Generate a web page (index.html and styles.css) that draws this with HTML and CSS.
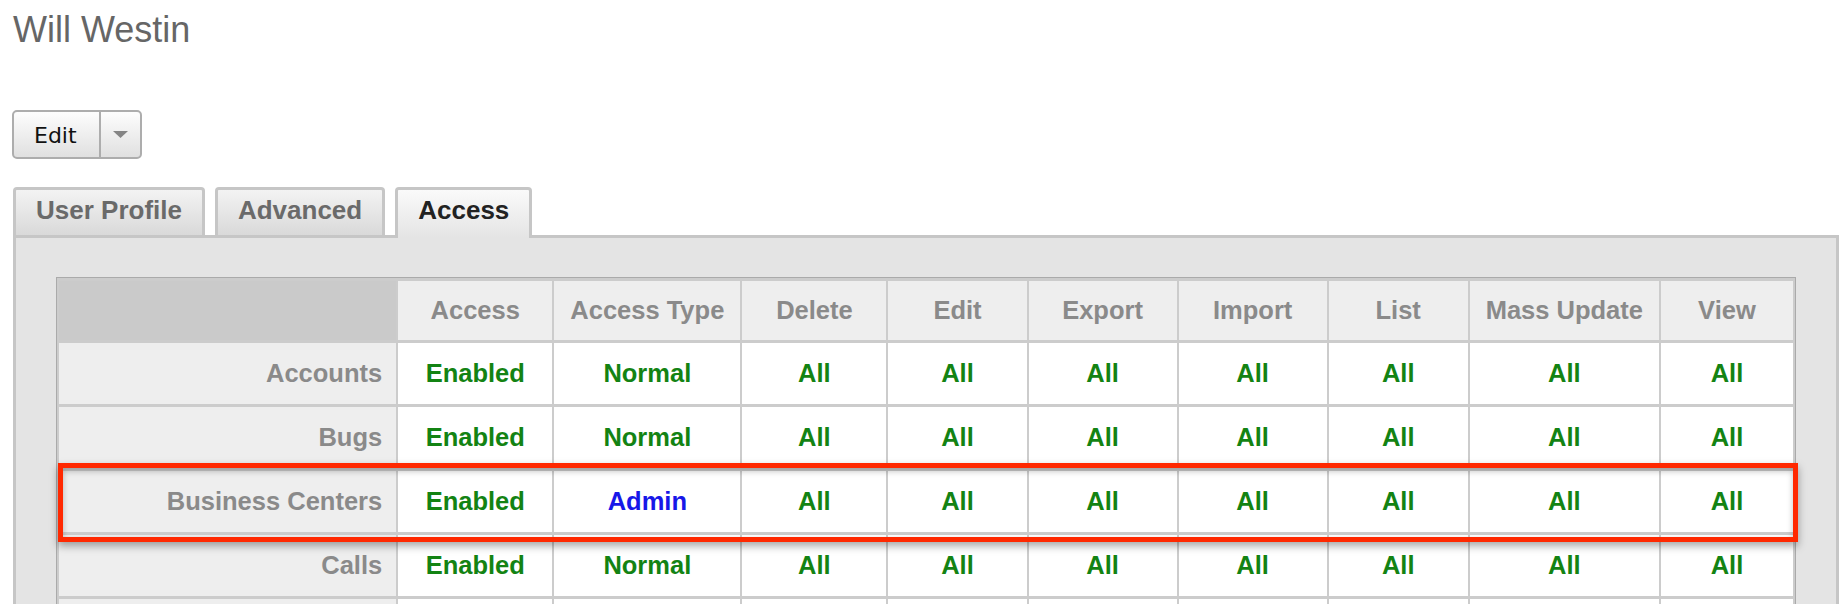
FILE: index.html
```html
<!DOCTYPE html>
<html lang="en">
<head>
    <meta charset="UTF-8">
    <title>Will Westin</title>
    <link rel="stylesheet" href="styles.css">
</head>
<body>
<div class="page">

  <h1 class="page-title">Will Westin</h1>

  <!-- actions -->
  <div class="btn-group">
    <span class="btn-main">Edit</span>
    <span class="btn-caret">
      <svg width="15" height="7" viewBox="0 0 15 7"><polygon points="0,0 15,0 7.5,7" fill="#858585"/></svg>
    </span>
  </div>

  <!-- tabs -->
  <ul class="tabs">
    <li class="tab">User Profile</li>
    <li class="tab">Advanced</li>
    <li class="tab active">Access</li>
  </ul>

  <div class="panel">
    <div class="acl-wrap">
      <table class="acl">
        <colgroup>
          <col class="c-mod">
          <col class="c-access">
          <col class="c-type">
          <col class="c-delete">
          <col class="c-edit">
          <col class="c-export">
          <col class="c-import">
          <col class="c-list">
          <col class="c-mass">
          <col class="c-view">
        </colgroup>
        <thead>
          <tr>
            <th class="corner"></th>
            <th>Access</th>
            <th>Access Type</th>
            <th>Delete</th>
            <th>Edit</th>
            <th>Export</th>
            <th>Import</th>
            <th>List</th>
            <th>Mass Update</th>
            <th>View</th>
          </tr>
        </thead>
        <tbody>
          <tr>
            <th class="mod">Accounts</th>
            <td>Enabled</td><td>Normal</td>
            <td>All</td><td>All</td><td>All</td><td>All</td><td>All</td><td>All</td><td>All</td>
          </tr>
          <tr>
            <th class="mod">Bugs</th>
            <td>Enabled</td><td>Normal</td>
            <td>All</td><td>All</td><td>All</td><td>All</td><td>All</td><td>All</td><td>All</td>
          </tr>
          <tr>
            <th class="mod">Business Centers</th>
            <td>Enabled</td><td class="admin">Admin</td>
            <td>All</td><td>All</td><td>All</td><td>All</td><td>All</td><td>All</td><td>All</td>
          </tr>
          <tr>
            <th class="mod">Calls</th>
            <td>Enabled</td><td>Normal</td>
            <td>All</td><td>All</td><td>All</td><td>All</td><td>All</td><td>All</td><td>All</td>
          </tr>
          <tr>
            <th class="mod">Campaigns</th>
            <td>Enabled</td><td>Normal</td>
            <td>All</td><td>All</td><td>All</td><td>All</td><td>All</td><td>All</td><td>All</td>
          </tr>
        </tbody>
      </table>
      <!-- annotation box round the Business Centers row -->
      <div class="row-mark"></div>
    </div>
  </div>

</div>
</body>
</html>
```

FILE: styles.css
```css
body { margin: 0; font-family: "Liberation Sans", Arial, sans-serif; background: #fff; }
.page { padding: 0 5px 0 13px; }

.page-title {
    margin: 0;
    padding-top: 10px;
    font-size: 36px;
    line-height: 40px;
    font-weight: normal;
    color: #666;
}

/* Edit button */
.btn-group {
    display: inline-flex;
    margin: 60px 0 0 -1px;
    height: 49px;
    box-sizing: border-box;
    border: 2px solid #adadad;
    border-radius: 5px;
    background: linear-gradient(#fdfdfd, #e0e0e0);
}
.btn-main {
    padding: 2px 22px 0 20px;
    font-family: "DejaVu Sans", sans-serif;
    font-size: 22px;
    line-height: 43px;
    color: #111;
}
.btn-caret {
    width: 39px;
    border-left: 2px solid #adadad;
    display: flex;
    align-items: center;
    justify-content: center;
}

/* Tabs */
.tabs {
    list-style: none;
    margin: 28px 0 0;
    padding: 0;
    display: flex;
    align-items: flex-start;
}
.tab {
    margin-right: 10px;
    padding: 5px 20px 10px;
    border: 3px solid #c6c6c6;
    border-bottom: 0;
    border-radius: 4px 4px 0 0;
    background: linear-gradient(#f3f3f3, #d9d9d9);
    font-size: 26px;
    line-height: 30px;
    font-weight: bold;
    color: #6a6a6a;
}
.tab.active {
    position: relative;
    z-index: 1;
    margin-bottom: -3px;
    padding-bottom: 13px;
    background: linear-gradient(#fafafa, #e4e4e4);
    color: #222;
}

.panel {
    border: 3px solid #c6c6c6;
    background: #e4e4e4;
    padding: 39px 40px 40px;
}

/* Access table */
.acl-wrap { position: relative; }
.acl {
    width: 100%;
    table-layout: fixed;
    border: 1px solid #aaa;
    border-collapse: separate;
    border-spacing: 2px 3px;
    background: #ccc;
    font-size: 25.5px;
    font-weight: bold;
}
.c-mod { width: 337px; }
.c-access { width: 154px; }
.c-type { width: 186px; }
.c-delete { width: 144px; }
.c-edit { width: 138px; }
.c-export { width: 148px; }
.c-import { width: 148px; }
.c-list { width: 139px; }
.c-mass { width: 189px; }
.c-view { width: 132px; }

.acl th, .acl td { padding: 0; text-align: center; vertical-align: middle; white-space: nowrap; }
.acl thead th { height: 59px; background: #eee; color: #8a8a8a; }
.acl thead th.corner { background: #cacaca; }
.acl td { height: 61px; background: #fff; color: #138313; }
.acl td.admin { color: #1717e8; }
.acl th.mod { text-align: right; padding-right: 14px; background: #eee; color: #8a8a8a; }

.row-mark {
    position: absolute;
    left: 2px;
    top: 186px;
    width: 1740px;
    height: 79px;
    box-sizing: border-box;
    border: 5px solid #ff2800;
    box-shadow: 0 4px 8px rgba(0, 0, 0, 0.35), inset 0 3px 6px rgba(0, 0, 0, 0.25);
    pointer-events: none;
}
```
